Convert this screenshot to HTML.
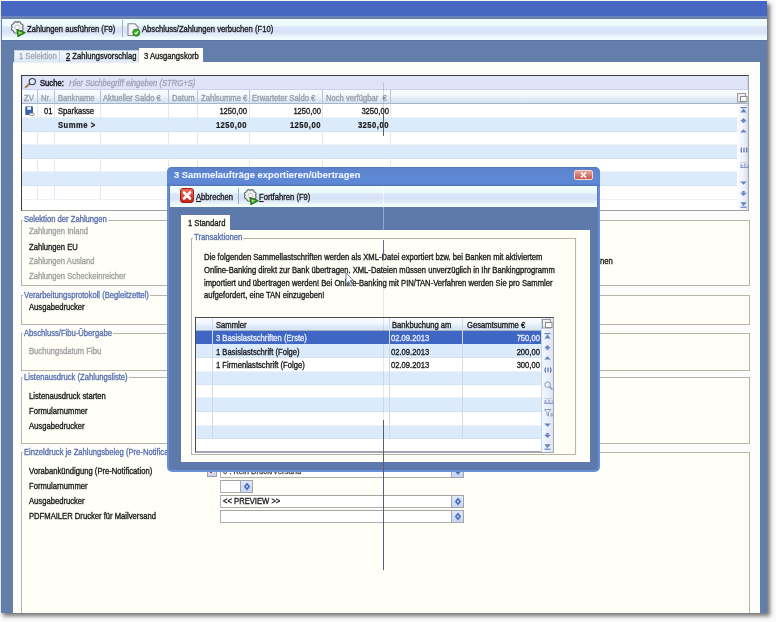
<!DOCTYPE html>
<html><head><meta charset="utf-8">
<style>
*{margin:0;padding:0;box-sizing:border-box}
html,body{width:776px;height:622px;overflow:hidden;background:#fbfbfb}
body{position:relative;font-family:"Liberation Sans",sans-serif;font-size:7.65px;letter-spacing:0px;color:#1a1a1a}
.a{position:absolute}
.t{position:absolute;white-space:nowrap;line-height:10px;height:10px;-webkit-text-stroke-width:0.3px;will-change:transform;transform:scaleY(1.12);transform-origin:0 0}
.ti{display:inline-block;-webkit-text-stroke-width:0.3px;will-change:transform;transform:scaleY(1.12);transform-origin:0 0}
.b{font-weight:bold;letter-spacing:0.5px;-webkit-text-stroke-width:0.2px}
</style></head><body>
<div class="a" style="left:3px;top:4px;width:767px;height:612px;background:rgba(0,0,0,.55);filter:blur(2.2px)"></div>
<div class="a" id="clip" style="left:0;top:0;width:767px;height:613px;overflow:hidden">
<div class="a" style="left:1px;top:1px;width:766px;height:612px;background:#637eab"></div>
<div class="a" style="left:1px;top:1px;width:766px;height:15px;background:#4668c3"></div>
<div class="a" style="left:1px;top:16px;width:766px;height:3px;background:linear-gradient(#7088b8,#6680b0)"></div>
<div class="a" style="left:1px;top:40px;width:766px;height:1px;background:#5c76a6"></div>
<div class="a" style="left:2px;top:18.5px;width:765px;height:21.5px;background:linear-gradient(#f0fdfd 0%,#ecfafc 30%,#dae6f8 40%,#d6e2f8 62%,#e2eefa 75%,#effbfc 90%,#f2fdfd 100%)"></div>
<svg class="a" style="left:9px;top:20px" width="17" height="18" viewBox="0 0 17 18"><path d="M13.50 7.40 Q15.23 10.27 11.98 11.08 Q11.17 14.33 8.30 12.60 Q5.43 14.33 4.62 11.08 Q1.37 10.27 3.10 7.40 Q1.37 4.53 4.62 3.72 Q5.43 0.47 8.30 2.20 Q11.17 0.47 11.98 3.72 Q15.23 4.53 13.50 7.40 Z" fill="#eef0f2" stroke="#606468" stroke-width="1.1" stroke-linejoin="round"/><circle cx="8.3" cy="7.4" r="2.2" fill="#fafafa" stroke="#b0b4b8" stroke-width="0.7"/><path d="M8 9.6 L16 12.6 L9 16.4 Z" fill="#48aa2e" stroke="#2a7418" stroke-width="1.2" stroke-linejoin="round"/><path d="M9.6 11.4 L13.2 12.7 L10 14.6Z" fill="#98e868"/></svg>
<div class="t" style="left:27px;top:23.8px;">Zahlungen ausführen (F9)</div>
<div class="a" style="left:122px;top:20px;width:1px;height:17px;background:#a4aeba"></div>
<svg class="a" style="left:127px;top:23px" width="14" height="14" viewBox="0 0 14 14"><path d="M1 0.8 H8 L11 3.8 V12.5 H1Z" fill="#f6f6fa" stroke="#84888c" stroke-width="1.1"/><circle cx="9.3" cy="9.6" r="3.6" fill="#3aa82a" stroke="#267416" stroke-width="0.8"/><path d="M7.4 9.6 L8.9 11 L11.2 8.2" stroke="#e0ffd0" stroke-width="1.2" fill="none"/></svg>
<div class="t" style="left:142px;top:23.8px;">Abschluss/Zahlungen verbuchen (F10)</div>
<div class="a" style="left:14px;top:50px;width:46px;height:13px;background:linear-gradient(#f0f8fd,#dce8f6);border:1px solid #c4d2e4;border-bottom:none"></div>
<div class="t g" style="left:19px;top:50.8px;color:#a4a8b0">1 Selektion</div>
<div class="a" style="left:59px;top:50px;width:80px;height:13px;background:linear-gradient(#f0f8fd,#dce8f6);border:1px solid #c4d2e4;border-bottom:none"></div>
<div class="t" style="left:66px;top:50.8px;"><u>2</u> Zahlungsvorschlag</div>
<div class="a" style="left:13px;top:62px;width:747px;height:551px;background:#fcfdfb"></div>
<div class="a" style="left:13px;top:62px;width:126px;height:1px;background:#e8eef6"></div>
<div class="a" style="left:139px;top:48px;width:64px;height:15px;background:#fffef7"></div>
<div class="t" style="left:144px;top:50.8px;">3 Ausgangskorb</div>
<div class="a" style="left:21px;top:75px;width:728px;height:136px;background:#fff;border:1px solid #3c3c3c;border-right-color:#a8a8a8;border-bottom-color:#a0a0a0"></div>
<div class="a" style="left:22px;top:76px;width:726px;height:14px;background:#e0e4f8;border:1px solid #c8d0ee;border-top:none"></div>
<div class="a" style="left:22px;top:90px;width:726px;height:14px;background:linear-gradient(#fbfdff 0%,#f2f8fd 40%,#dde9f8 75%,#d6e4f6 100%);border-bottom:1px solid #a8b4c4"></div>
<div class="a" style="left:22px;top:104px;width:715px;height:14px;background:#fff;border-bottom:1px solid #edf2f8"></div>
<div class="a" style="left:22px;top:118px;width:715px;height:14px;background:#dbebfb;border-bottom:1px solid #d2e2f2"></div>
<div class="a" style="left:22px;top:132px;width:715px;height:13px;background:#fff;border-bottom:1px solid #edf2f8"></div>
<div class="a" style="left:22px;top:145px;width:715px;height:14px;background:#dbebfb;border-bottom:1px solid #d2e2f2"></div>
<div class="a" style="left:22px;top:159px;width:715px;height:13px;background:#fff;border-bottom:1px solid #edf2f8"></div>
<div class="a" style="left:22px;top:172px;width:715px;height:14px;background:#dbebfb;border-bottom:1px solid #d2e2f2"></div>
<div class="a" style="left:22px;top:186px;width:715px;height:14px;background:#fff;border-bottom:1px solid #edf2f8"></div>
<div class="a" style="left:37px;top:90px;width:1px;height:14px;background:#b8c2d0"></div>
<div class="a" style="left:37px;top:104px;width:1px;height:95px;background:#e2e8f0"></div>
<div class="a" style="left:54px;top:90px;width:1px;height:14px;background:#b8c2d0"></div>
<div class="a" style="left:54px;top:104px;width:1px;height:95px;background:#e2e8f0"></div>
<div class="a" style="left:100px;top:90px;width:1px;height:14px;background:#b8c2d0"></div>
<div class="a" style="left:100px;top:104px;width:1px;height:95px;background:#e2e8f0"></div>
<div class="a" style="left:168px;top:90px;width:1px;height:14px;background:#b8c2d0"></div>
<div class="a" style="left:168px;top:104px;width:1px;height:95px;background:#e2e8f0"></div>
<div class="a" style="left:197px;top:90px;width:1px;height:14px;background:#b8c2d0"></div>
<div class="a" style="left:197px;top:104px;width:1px;height:95px;background:#e2e8f0"></div>
<div class="a" style="left:249px;top:90px;width:1px;height:14px;background:#b8c2d0"></div>
<div class="a" style="left:249px;top:104px;width:1px;height:95px;background:#e2e8f0"></div>
<div class="a" style="left:322px;top:90px;width:1px;height:14px;background:#b8c2d0"></div>
<div class="a" style="left:322px;top:104px;width:1px;height:95px;background:#e2e8f0"></div>
<div class="a" style="left:390px;top:90px;width:1px;height:14px;background:#b8c2d0"></div>
<div class="a" style="left:390px;top:104px;width:1px;height:95px;background:#e2e8f0"></div>
<svg class="a" style="left:24px;top:77px" width="13" height="12" viewBox="0 0 13 12"><path d="M1.8 10.2 L5.5 6.8" stroke="#a88860" stroke-width="2.4" stroke-linecap="round"/><circle cx="8.3" cy="4.6" r="3.1" fill="#d8ecf8" stroke="#383e46" stroke-width="1.1"/></svg>
<div class="t" style="left:40px;top:77.8px;color:#202028;-webkit-text-stroke-width:0.45px">Suche:</div>
<div class="t" style="left:69px;top:77.8px;color:#a0a4b8;font-style:italic">Hier Suchbegriff eingeben (STRG+S)</div>
<div class="t" style="left:24px;top:92.8px;color:#989ea8">ZV</div>
<div class="t" style="left:41px;top:92.8px;color:#989ea8">Nr.</div>
<div class="t" style="left:58px;top:92.8px;color:#989ea8">Bankname</div>
<div class="t" style="left:103px;top:92.8px;color:#989ea8">Aktueller Saldo €</div>
<div class="t" style="left:172px;top:92.8px;color:#989ea8">Datum</div>
<div class="t" style="left:201px;top:92.8px;color:#989ea8">Zahlsumme €</div>
<div class="t" style="left:252px;top:92.8px;color:#989ea8">Erwarteter Saldo €</div>
<div class="t" style="left:326px;top:92.8px;color:#989ea8">Noch verfügbar &nbsp;€</div>
<svg class="a" style="left:25px;top:106px" width="10" height="10" viewBox="0 0 10 10"><path d="M0.8 0.8 H7.5 V8.5 H0.8Z" fill="#3a62ae" stroke="#26509a" stroke-width="0.8"/><rect x="2.2" y="0.8" width="3.8" height="3" fill="#e8f0ff"/><ellipse cx="6.6" cy="8.3" rx="2.6" ry="1.3" fill="#fff" stroke="#707070" stroke-width="0.8"/></svg>
<div class="t" style="left:44px;top:105.8px;">01</div>
<div class="t" style="left:58px;top:105.8px;">Sparkasse</div>
<div class="t" style="left:127px;width:120px;text-align:right;top:105.8px;">1250,00</div>
<div class="t" style="left:201px;width:120px;text-align:right;top:105.8px;">1250,00</div>
<div class="t" style="left:269px;width:120px;text-align:right;top:105.8px;">3250,00</div>
<div class="t b" style="left:58px;top:119.8px;">Summe &gt;</div>
<div class="t b" style="left:127px;width:120px;text-align:right;top:119.8px;">1250,00</div>
<div class="t b" style="left:201px;width:120px;text-align:right;top:119.8px;">1250,00</div>
<div class="t b" style="left:269px;width:120px;text-align:right;top:119.8px;">3250,00</div>
<div class="a" style="left:737px;top:104px;width:11px;height:106px;background:linear-gradient(90deg,#fbfcff,#eef2fb 60%,#d4def2)"></div>
<svg class="a" style="left:737px;top:93px" width="11" height="10" viewBox="0 0 11 10"><rect x="0.5" y="0.5" width="8" height="8.5" fill="#eeeeee" stroke="#9a9a9a"/><rect x="3.5" y="3.5" width="6.5" height="5" fill="#fafafa" stroke="#8a8a8a"/></svg>
<svg class="a" style="left:740px;top:107px" width="7" height="6" viewBox="0 0 7 6"><rect x="0.5" y="0" width="6" height="1.2" fill="#6a82bc"/><path d="M3.5 1.6 L6.6 5.6 H0.4Z" fill="#6a82bc"/></svg>
<svg class="a" style="left:740px;top:118px" width="7" height="5" viewBox="0 0 7 5"><path d="M3.5 0 L6.8 3.2 H0.2Z" fill="#6a82bc"/><rect x="2.3" y="3" width="2.4" height="1.8" fill="#6a82bc"/></svg>
<svg class="a" style="left:740px;top:129px" width="7" height="4" viewBox="0 0 7 4"><path d="M3.5 0.2 L6.8 3.5 H0.2Z" fill="#6a82bc"/></svg>
<svg class="a" style="left:740px;top:147px" width="8" height="6" viewBox="0 0 8 6"><path d="M1.8 0.5 Q0.3 3 1.8 5.5 M6.2 0.5 Q7.7 3 6.2 5.5 M4 0.8 V5.2" stroke="#4e66a8" stroke-width="1.1" fill="none"/></svg>
<svg class="a" style="left:740px;top:162px" width="9" height="6" viewBox="0 0 9 6"><rect x="0" y="0" width="9" height="0.6" fill="#b0bcd8"/><text x="0" y="4.6" font-size="4.5" font-family="Liberation Sans" fill="#6a82bc">a,b,c</text><rect x="0" y="5.2" width="9" height="0.7" fill="#6a82bc"/></svg>
<svg class="a" style="left:740px;top:181px" width="7" height="4" viewBox="0 0 7 4"><path d="M3.5 3.8 L6.8 0.5 H0.2Z" fill="#6a82bc"/></svg>
<svg class="a" style="left:740px;top:191px" width="7" height="5" viewBox="0 0 7 5"><rect x="2.3" y="0" width="2.4" height="1.8" fill="#6a82bc"/><path d="M3.5 5 L6.8 1.8 H0.2Z" fill="#6a82bc"/></svg>
<svg class="a" style="left:740px;top:202px" width="7" height="6" viewBox="0 0 7 6"><path d="M3.5 4.2 L6.6 0.2 H0.4Z" fill="#6a82bc"/><rect x="0.5" y="4.6" width="6" height="1.2" fill="#6a82bc"/></svg>
<div class="a" style="left:21px;top:220px;width:729px;height:66px;border:1px solid #b8b4a8;background:#fffef7"></div>
<div class="a" style="left:23px;top:213.8px;height:10px;line-height:10px;white-space:nowrap;background:#fffef7;padding:0 1px"><span class="ti" style="color:#5870b4">Selektion der Zahlungen</span></div>
<div class="a" style="left:21px;top:295px;width:729px;height:30px;border:1px solid #b8b4a8;background:#fffef7"></div>
<div class="a" style="left:23px;top:289.8px;height:10px;line-height:10px;white-space:nowrap;background:#fffef7;padding:0 1px"><span class="ti" style="color:#5870b4">Verarbeitungsprotokoll (Begleitzettel)</span></div>
<div class="a" style="left:21px;top:333px;width:729px;height:38px;border:1px solid #b8b4a8;background:#fffef7"></div>
<div class="a" style="left:23px;top:327.8px;height:10px;line-height:10px;white-space:nowrap;background:#fffef7;padding:0 1px"><span class="ti" style="color:#5870b4">Abschluss/Fibu-Übergabe</span></div>
<div class="a" style="left:21px;top:377px;width:729px;height:67px;border:1px solid #b8b4a8;background:#fffef7"></div>
<div class="a" style="left:23px;top:371.8px;height:10px;line-height:10px;white-space:nowrap;background:#fffef7;padding:0 1px"><span class="ti" style="color:#5870b4">Listenausdruck (Zahlungsliste)</span></div>
<div class="a" style="left:21px;top:452px;width:729px;height:189px;border:1px solid #b8b4a8;background:#fffef7"></div>
<div class="a" style="left:23px;top:446.8px;height:10px;line-height:10px;white-space:nowrap;background:#fffef7;padding:0 1px"><span class="ti" style="color:#5870b4">Einzeldruck je Zahlungsbeleg (Pre-Notification)</span></div>
<div class="t" style="left:29px;top:225.8px;color:#a0a0a0">Zahlungen Inland</div>
<div class="t" style="left:29px;top:241.8px;">Zahlungen EU</div>
<div class="t" style="left:29px;top:255.8px;color:#a0a0a0">Zahlungen Ausland</div>
<div class="t" style="left:29px;top:270.8px;color:#a0a0a0">Zahlungen Scheckeinreicher</div>
<div class="t" style="left:29px;top:301.8px;">Ausgabedrucker</div>
<div class="t" style="left:29px;top:345.8px;color:#a0a0a0">Buchungsdatum Fibu</div>
<div class="t" style="left:29px;top:390.8px;">Listenausdruck starten</div>
<div class="t" style="left:29px;top:405.8px;">Formularnummer</div>
<div class="t" style="left:29px;top:420.8px;">Ausgabedrucker</div>
<div class="t" style="left:29px;top:465.8px;">Vorabankündigung (Pre-Notification)</div>
<div class="t" style="left:29px;top:480.8px;">Formularnummer</div>
<div class="t" style="left:29px;top:495.8px;">Ausgabedrucker</div>
<div class="t" style="left:29px;top:510.8px;">PDFMAILER Drucker für Mailversand</div>
<div class="t" style="left:600px;top:255.8px;">nen</div>
<div class="a" style="left:207px;top:467px;width:10px;height:10px;background:linear-gradient(#eef2fa,#c8d4e8);border:1px solid #98a0b4"></div>
<div class="a" style="left:210px;top:471px;width:2px;height:2px;background:#d02040"></div>
<div class="a" style="left:220px;top:464px;width:244px;height:14px;background:#fff;border:1px solid #b0b0b0;border-top-color:#a4a4a4"></div>
<div class="a" style="left:451px;top:464px;width:13px;height:14px;background:linear-gradient(#dfe8fb,#c8d6f4);border:1px solid #a4a4a8"></div>
<svg class="a" style="left:454px;top:466px" width="8" height="10" viewBox="0 0 8 9"><path d="M4 0.6 L7.2 4.5 L4 8.4 L0.8 4.5Z" fill="#4c6cb8"/><circle cx="4" cy="4.5" r="1.1" fill="#c8d8f8"/></svg>
<div class="t" style="left:223px;top:465.8px;"><span style="color:#4a4a4a">0 : Kein Druck/Versand</span></div>
<div class="a" style="left:220px;top:480px;width:33px;height:13px;background:#fff;border:1px solid #b0b0b0;border-top-color:#a4a4a4"></div>
<div class="a" style="left:240px;top:480px;width:13px;height:13px;background:linear-gradient(#dfe8fb,#c8d6f4);border:1px solid #a4a4a8"></div>
<svg class="a" style="left:243px;top:482px" width="8" height="9" viewBox="0 0 8 9"><path d="M4 0.6 L7.2 4.5 L4 8.4 L0.8 4.5Z" fill="#4c6cb8"/><circle cx="4" cy="4.5" r="1.1" fill="#c8d8f8"/></svg>
<div class="a" style="left:220px;top:495px;width:244px;height:13px;background:#fff;border:1px solid #b0b0b0;border-top-color:#a4a4a4"></div>
<div class="a" style="left:451px;top:495px;width:13px;height:13px;background:linear-gradient(#dfe8fb,#c8d6f4);border:1px solid #a4a4a8"></div>
<svg class="a" style="left:454px;top:497px" width="8" height="9" viewBox="0 0 8 9"><path d="M4 0.6 L7.2 4.5 L4 8.4 L0.8 4.5Z" fill="#4c6cb8"/><circle cx="4" cy="4.5" r="1.1" fill="#c8d8f8"/></svg>
<div class="t" style="left:223px;top:495.8px;">&lt;&lt; PREVIEW &gt;&gt;</div>
<div class="a" style="left:220px;top:510px;width:244px;height:13px;background:#fff;border:1px solid #b0b0b0;border-top-color:#a4a4a4"></div>
<div class="a" style="left:451px;top:510px;width:13px;height:13px;background:linear-gradient(#dfe8fb,#c8d6f4);border:1px solid #a4a4a8"></div>
<svg class="a" style="left:454px;top:512px" width="8" height="9" viewBox="0 0 8 9"><path d="M4 0.6 L7.2 4.5 L4 8.4 L0.8 4.5Z" fill="#4c6cb8"/><circle cx="4" cy="4.5" r="1.1" fill="#c8d8f8"/></svg>
<div class="a" style="left:167px;top:167px;width:433px;height:305px;background:#6890d8;border-radius:5px"></div>
<div class="a" style="left:169px;top:185px;width:429px;height:285px;background:#5e79ab;border-radius:0 0 3px 3px"></div>
<div class="a" style="left:167px;top:167px;width:433px;height:19px;background:linear-gradient(#5a78c0 0%,#5d82cc 10%,#5f88d6 60%,#5c86d4 88%,#5272b0 100%);border-radius:5px 5px 0 0"></div>
<div class="t" style="left:174px;top:168.5px;font-size:9.3px;letter-spacing:0.05px;font-weight:bold;color:#eef4ff;line-height:13px;height:13px;-webkit-text-stroke-width:0.1px;transform:none">3 Sammelaufträge exportieren/übertragen</div>
<div class="a" style="left:574px;top:170px;width:19px;height:10px;background:linear-gradient(#e8a498,#c4584a);border:1px solid #f4d8d0;border-radius:2px"></div>
<svg class="a" style="left:579px;top:171px" width="9" height="8" viewBox="0 0 9 8"><path d="M2 1.5 L7 6.5 M7 1.5 L2 6.5" stroke="#fff" stroke-width="1.6"/></svg>
<div class="a" style="left:170px;top:186px;width:427px;height:21px;background:linear-gradient(#f0fdfd 0%,#ecfafc 30%,#dae6f8 40%,#d6e2f8 62%,#e2eefa 75%,#effbfc 90%,#f2fdfd 100%)"></div>
<div class="a" style="left:180px;top:188px;width:14px;height:15px;background:linear-gradient(#f46a58,#c42818);border-radius:3px;border:1px solid #a01c10"></div>
<svg class="a" style="left:181px;top:189px" width="12" height="13" viewBox="0 0 12 13"><path d="M3 3.5 L9 9.5 M9 3.5 L3 9.5" stroke="#fff" stroke-width="2.6" stroke-linecap="round"/></svg>
<div class="t" style="left:196px;top:191.8px;"><u>A</u>bbrechen</div>
<div class="a" style="left:238px;top:188px;width:1px;height:16px;background:#a4aeba"></div>
<svg class="a" style="left:242px;top:188px" width="17" height="18" viewBox="0 0 17 18"><path d="M13.50 7.40 Q15.23 10.27 11.98 11.08 Q11.17 14.33 8.30 12.60 Q5.43 14.33 4.62 11.08 Q1.37 10.27 3.10 7.40 Q1.37 4.53 4.62 3.72 Q5.43 0.47 8.30 2.20 Q11.17 0.47 11.98 3.72 Q15.23 4.53 13.50 7.40 Z" fill="#eef0f2" stroke="#606468" stroke-width="1.1" stroke-linejoin="round"/><circle cx="8.3" cy="7.4" r="2.2" fill="#fafafa" stroke="#b0b4b8" stroke-width="0.7"/><path d="M8 9.6 L16 12.6 L9 16.4 Z" fill="#48aa2e" stroke="#2a7418" stroke-width="1.2" stroke-linejoin="round"/><path d="M9.6 11.4 L13.2 12.7 L10 14.6Z" fill="#98e868"/></svg>
<div class="t" style="left:259px;top:191.8px;"><u>F</u>ortfahren (F9)</div>
<div class="a" style="left:181px;top:215px;width:49px;height:16px;background:#fffef7"></div>
<div class="t" style="left:188px;top:217.8px;">1 Standard</div>
<div class="a" style="left:181px;top:230px;width:409px;height:232px;background:#fffef7"></div>
<div class="a" style="left:191px;top:238px;width:385px;height:217px;border:1px solid #b8b4a8"></div>
<div class="a" style="left:193px;top:231.8px;height:10px;line-height:10px;white-space:nowrap;background:#fffef7;padding:0 1px"><span class="ti" style="color:#5870b4">Transaktionen</span></div>
<div class="t" style="left:204px;top:251.8px;">Die folgenden Sammellastschriften werden als XML-Datei exportiert bzw. bei Banken mit aktiviertem</div>
<div class="t" style="left:204px;top:264.8px;">Online-Banking direkt zur Bank übertragen. XML-Dateien müssen unverzüglich in Ihr Bankingprogramm</div>
<div class="t" style="left:204px;top:277.8px;">importiert und übertragen werden! Bei Online-Banking mit PIN/TAN-Verfahren werden Sie pro Sammler</div>
<div class="t" style="left:204px;top:289.8px;">aufgefordert, eine TAN einzugeben!</div>
<div class="a" style="left:195px;top:317px;width:359px;height:136px;background:#fff;border:1px solid #4a4a4a;border-right-color:#a8a8a8;border-bottom:2px solid #a4a4b4"></div>
<div class="a" style="left:196px;top:318px;width:345px;height:13px;background:linear-gradient(#fbfdff 0%,#f2f8fd 40%,#dde9f8 75%,#d6e4f6 100%);border-bottom:1px solid #a8b4c4"></div>
<div class="a" style="left:196px;top:331px;width:345px;height:13px;background:#3f66c2;border-bottom:1px solid #3f66c2"></div>
<div class="a" style="left:196px;top:344px;width:345px;height:14px;background:#dbebfb;border-bottom:1px solid #d2e2f2"></div>
<div class="a" style="left:196px;top:358px;width:345px;height:14px;background:#fff;border-bottom:1px solid #edf2f8"></div>
<div class="a" style="left:196px;top:372px;width:345px;height:13px;background:#dbebfb;border-bottom:1px solid #d2e2f2"></div>
<div class="a" style="left:196px;top:385px;width:345px;height:13px;background:#fff;border-bottom:1px solid #edf2f8"></div>
<div class="a" style="left:196px;top:398px;width:345px;height:14px;background:#dbebfb;border-bottom:1px solid #d2e2f2"></div>
<div class="a" style="left:196px;top:412px;width:345px;height:14px;background:#fff;border-bottom:1px solid #edf2f8"></div>
<div class="a" style="left:196px;top:426px;width:345px;height:13px;background:#dbebfb;border-bottom:1px solid #d2e2f2"></div>
<div class="a" style="left:212px;top:318px;width:1px;height:121px;background:#d0d8e4"></div>
<div class="a" style="left:389px;top:318px;width:1px;height:121px;background:#d0d8e4"></div>
<div class="a" style="left:462px;top:318px;width:1px;height:121px;background:#d0d8e4"></div>
<div class="a" style="left:541px;top:318px;width:12px;height:134px;background:linear-gradient(90deg,#f4f8ff,#dce6f8);border-left:1px solid #c8d4e8"></div>
<div class="t" style="left:216px;top:319.8px;">Sammler</div>
<div class="t" style="left:392px;top:319.8px;">Bankbuchung am</div>
<div class="t" style="left:467px;top:319.8px;">Gesamtsumme €</div>
<div class="t" style="left:216px;top:332.8px;color:#e6ecff">3 Basislastschriften (Erste)</div>
<div class="t" style="left:391px;top:332.8px;color:#e6ecff">02.09.2013</div>
<div class="t" style="left:420px;width:120px;text-align:right;top:332.8px;color:#e6ecff">750,00</div>
<div class="t" style="left:216px;top:346.8px;">1 Basislastschrift (Folge)</div>
<div class="t" style="left:391px;top:346.8px;">02.09.2013</div>
<div class="t" style="left:420px;width:120px;text-align:right;top:346.8px;">200,00</div>
<div class="t" style="left:216px;top:359.8px;">1 Firmenlastschrift (Folge)</div>
<div class="t" style="left:391px;top:359.8px;">02.09.2013</div>
<div class="t" style="left:420px;width:120px;text-align:right;top:359.8px;">300,00</div>
<svg class="a" style="left:542px;top:319px" width="11" height="10" viewBox="0 0 11 10"><rect x="0.5" y="0.5" width="8" height="8.5" fill="#eeeeee" stroke="#9a9a9a"/><rect x="3.5" y="3.5" width="6.5" height="5" fill="#fafafa" stroke="#8a8a8a"/></svg>
<svg class="a" style="left:544px;top:333px" width="7" height="6" viewBox="0 0 7 6"><rect x="0.5" y="0" width="6" height="1.2" fill="#6a82bc"/><path d="M3.5 1.6 L6.6 5.6 H0.4Z" fill="#6a82bc"/></svg>
<svg class="a" style="left:544px;top:345px" width="7" height="5" viewBox="0 0 7 5"><path d="M3.5 0 L6.8 3.2 H0.2Z" fill="#6a82bc"/><rect x="2.3" y="3" width="2.4" height="1.8" fill="#6a82bc"/></svg>
<svg class="a" style="left:544px;top:356px" width="7" height="4" viewBox="0 0 7 4"><path d="M3.5 0.2 L6.8 3.5 H0.2Z" fill="#6a82bc"/></svg>
<svg class="a" style="left:544px;top:367px" width="8" height="6" viewBox="0 0 8 6"><path d="M1.8 0.5 Q0.3 3 1.8 5.5 M6.2 0.5 Q7.7 3 6.2 5.5 M4 0.8 V5.2" stroke="#4e66a8" stroke-width="1.1" fill="none"/></svg>
<svg class="a" style="left:544px;top:398px" width="9" height="6" viewBox="0 0 9 6"><rect x="0" y="0" width="9" height="0.6" fill="#b0bcd8"/><text x="0" y="4.6" font-size="4.5" font-family="Liberation Sans" fill="#6a82bc">a,b,c</text><rect x="0" y="5.2" width="9" height="0.7" fill="#6a82bc"/></svg>
<svg class="a" style="left:544px;top:381px" width="9" height="9" viewBox="0 0 9 9"><circle cx="3.6" cy="3.6" r="2.8" stroke="#8898b8" stroke-width="1" fill="none"/><path d="M5.6 5.6 L8.5 8.5" stroke="#8898b8" stroke-width="1.5"/></svg>
<svg class="a" style="left:544px;top:409px" width="10" height="8" viewBox="0 0 10 8"><path d="M0.5 0.5 H7 L4.5 3.5 V7 L3 6 V3.5Z" fill="none" stroke="#8898b8" stroke-width="0.9"/><rect x="6.5" y="4" width="3" height="3.5" fill="#a8b4cc"/></svg>
<svg class="a" style="left:544px;top:423px" width="7" height="4" viewBox="0 0 7 4"><path d="M3.5 3.8 L6.8 0.5 H0.2Z" fill="#6a82bc"/></svg>
<svg class="a" style="left:544px;top:433px" width="7" height="5" viewBox="0 0 7 5"><rect x="2.3" y="0" width="2.4" height="1.8" fill="#6a82bc"/><path d="M3.5 5 L6.8 1.8 H0.2Z" fill="#6a82bc"/></svg>
<svg class="a" style="left:544px;top:444px" width="7" height="6" viewBox="0 0 7 6"><path d="M3.5 4.2 L6.6 0.2 H0.4Z" fill="#6a82bc"/><rect x="0.5" y="4.6" width="6" height="1.2" fill="#6a82bc"/></svg>
<div class="a" style="left:383px;top:82px;width:1px;height:28px;background:rgba(90,100,110,.25)"></div>
<div class="a" style="left:383px;top:110px;width:1px;height:26px;background:#586070"></div>
<div class="a" style="left:383px;top:186px;width:1px;height:22px;background:rgba(255,255,255,.6)"></div>
<div class="a" style="left:383px;top:208px;width:1px;height:22px;background:rgba(200,215,240,.5)"></div>
<div class="a" style="left:383px;top:240px;width:1px;height:20px;background:#6a7080"></div>
<div class="a" style="left:383px;top:260px;width:1px;height:160px;background:rgba(90,100,110,.15)"></div>
<div class="a" style="left:383px;top:420px;width:1px;height:150px;background:#586070"></div>
<svg class="a" style="left:345px;top:272px" width="10" height="16" viewBox="0 0 10 16"><path d="M1 1 L1 12 L3.5 9.5 L6 14 L7.5 13 L5.2 8.6 L8.5 8.6 Z" fill="#fff" stroke="#7080a8" stroke-width="1"/></svg>
</div>
</body></html>
